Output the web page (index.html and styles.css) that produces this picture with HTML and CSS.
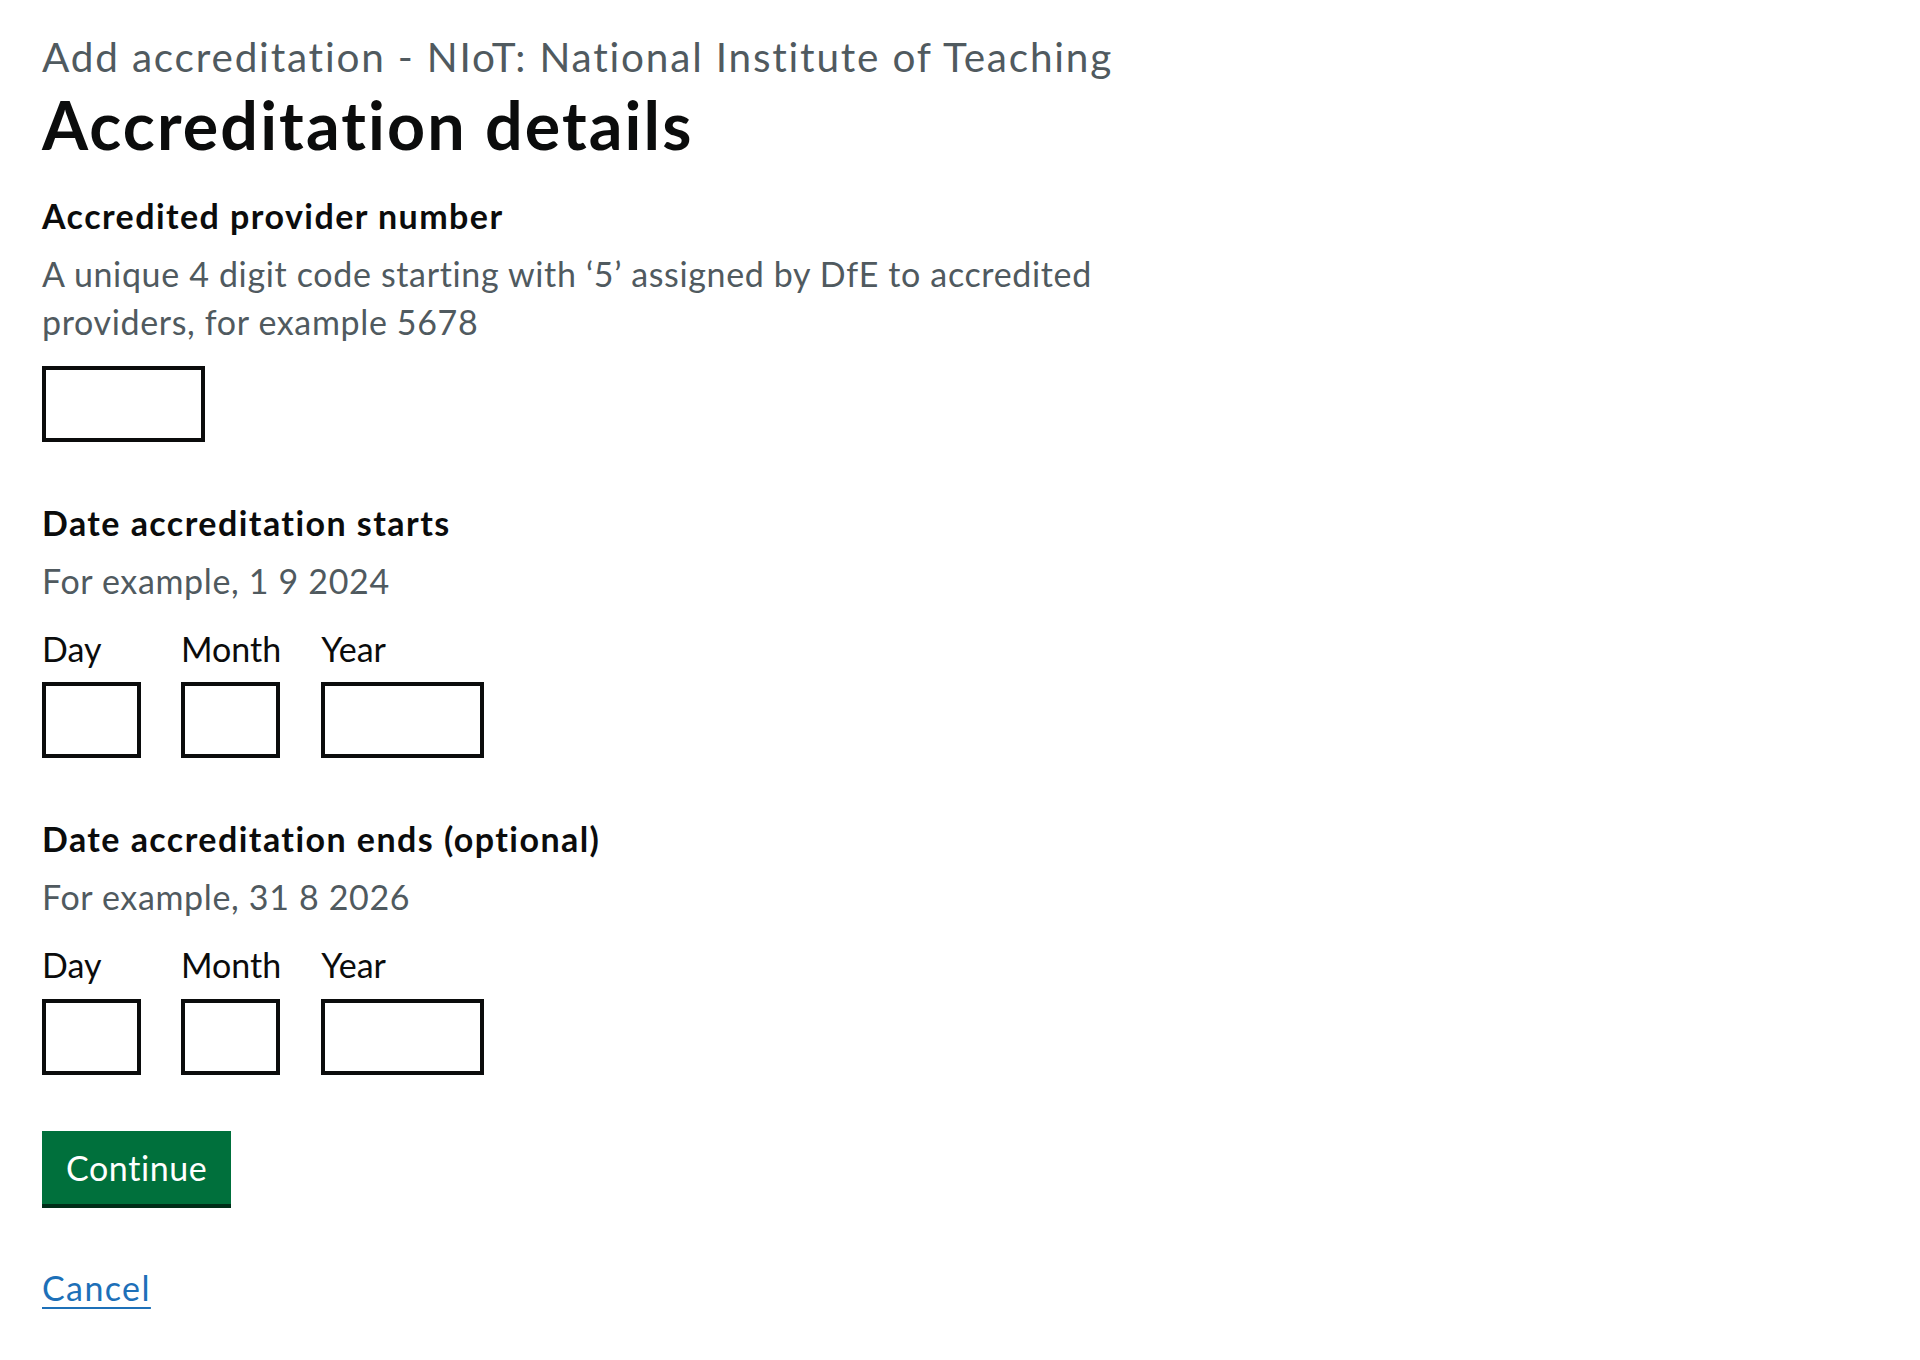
FILE: index.html
```html
<!DOCTYPE html>
<html lang="en">
<head>
<meta charset="utf-8">
<title>Accreditation details</title>
<link rel="stylesheet" href="styles.css">
</head>
<body>
<main class="page">
  <form class="form">
    <span class="caption">Add accreditation - NIoT: National Institute of Teaching</span>
    <h1 class="heading">Accreditation details</h1>

    <div class="form-group">
      <label class="label" for="number">Accredited provider number</label>
      <div class="hint">A unique 4 digit code starting with ‘5’ assigned by DfE to accredited providers, for example 5678</div>
      <input class="input input-w4" id="number" type="text">
    </div>

    <div class="form-group">
      <div class="label">Date accreditation starts</div>
      <div class="hint">For example, 1 9 2024</div>
      <div class="date-input">
        <div class="date-item">
          <label class="date-label">Day</label>
          <input class="input input-w2" type="text">
        </div>
        <div class="date-item">
          <label class="date-label">Month</label>
          <input class="input input-w2" type="text">
        </div>
        <div class="date-item">
          <label class="date-label">Year</label>
          <input class="input input-w4" type="text">
        </div>
      </div>
    </div>

    <div class="form-group">
      <div class="label">Date accreditation ends (optional)</div>
      <div class="hint">For example, 31 8 2026</div>
      <div class="date-input">
        <div class="date-item">
          <label class="date-label">Day</label>
          <input class="input input-w2" type="text">
        </div>
        <div class="date-item">
          <label class="date-label">Month</label>
          <input class="input input-w2" type="text">
        </div>
        <div class="date-item">
          <label class="date-label">Year</label>
          <input class="input input-w4" type="text">
        </div>
      </div>
    </div>

    <div class="actions">
      <button class="button" type="button">Continue</button>
      <a class="link" href="#">Cancel</a>
    </div>
  </form>
</main>
</body>
</html>
```

FILE: styles.css
```css
html, body {
  margin: 0;
  padding: 0;
  background: #ffffff;
}

body {
  font-family: Lato, "Noto Sans", Arial, sans-serif;
  color: #0b0c0c;
}

.page {
  padding: 32px 0 0 42px;
}

.form {
  width: 1160px;
  display: flex;
  flex-direction: column;
  align-items: flex-start;
}

.caption {
  display: block;
  font-size: 40.5px;
  line-height: 50px;
  letter-spacing: 1.8px;
  color: #505a5f;
  margin-bottom: 4px;
}

.heading {
  margin: 0 0 30px;
  font-size: 66.4px;
  line-height: 76px;
  font-weight: 700;
  letter-spacing: 2.1px;
  color: #0b0c0c;
}

.form-group {
  display: flex;
  flex-direction: column;
  align-items: flex-start;
  margin-bottom: 57px;
}

.label {
  display: block;
  font-size: 34px;
  line-height: 47.5px;
  font-weight: 700;
  letter-spacing: 1.45px;
  margin-bottom: 10.5px;
}

.hint {
  font-size: 34px;
  line-height: 47.5px;
  letter-spacing: 0.65px;
  color: #505a5f;
  margin-bottom: 20.5px;
}

.input {
  box-sizing: border-box;
  height: 76px;
  border: 4px solid #0b0c0c;
  border-radius: 0;
  background: #ffffff;
  margin: 0;
  padding: 0 8px;
  font: inherit;
  font-size: 34px;
}

.input-w4 {
  width: 163px;
}

.input-w2 {
  width: 99px;
}

.date-input {
  display: flex;
  gap: 40px;
}

.date-item {
  display: flex;
  flex-direction: column;
  align-items: flex-start;
}

.date-label {
  font-size: 34px;
  line-height: 47.5px;
  margin-bottom: 10.4px;
}

.actions {
  display: flex;
  flex-direction: column;
  align-items: flex-start;
  margin-top: -1px;
}

.button {
  box-sizing: border-box;
  height: 73px;
  padding: 0 24px;
  border: 0;
  border-radius: 0;
  background: #00703c;
  color: #ffffff;
  font: inherit;
  font-size: 34px;
  line-height: 40px;
  letter-spacing: 0.6px;
  box-shadow: 0 4px 0 #002d18;
  margin-bottom: 60px;
  cursor: pointer;
}

.link {
  font-size: 34px;
  line-height: 47.5px;
  letter-spacing: 1.4px;
  color: #1d70b8;
  text-decoration: underline;
  text-decoration-thickness: 2px;
  text-underline-offset: 6px;
}
```
